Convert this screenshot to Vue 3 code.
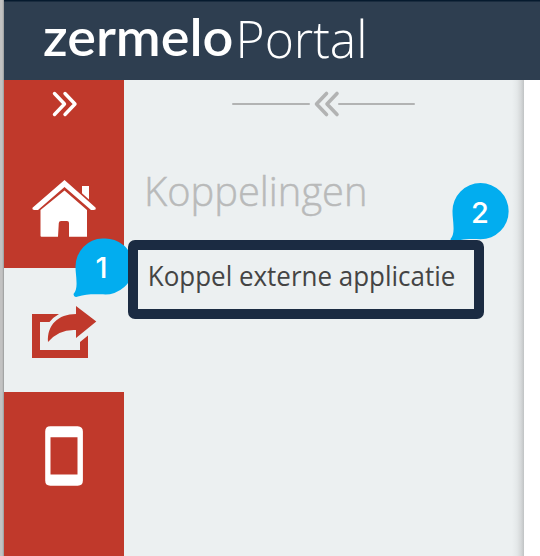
<script setup>
const title = 'Koppelingen'
const action = 'Koppel externe applicatie'
</script>

<template>
  <div class="screen">
    <div class="edge"></div>
    <div class="portal">
      <header class="header">
        <svg class="logo" width="400" height="80" viewBox="0 0 400 80">
          <text class="brand" x="39" y="56" textLength="190.500" lengthAdjust="spacingAndGlyphs">zermelo</text>
          <text class="product" x="231.500" y="57.500" textLength="132" lengthAdjust="spacingAndGlyphs">Portal</text>
        </svg>
      </header>
      <div class="body">
        <nav class="rail">
          <div class="tile home">
            <svg width="120" height="188" viewBox="4 80 120 188">
              <path d="M54.5 93.5 64.5 104 54.5 114.5M65 93.5 75 104 65 114.5" fill="none" stroke="#fff" stroke-width="3.4" stroke-linecap="round" stroke-linejoin="round" />
              <path d="M64.5 180 95.5 207.5Q96.500 210 93.500 210H91L64.500 187 38 210H34.500Q32 210 32.500 207.800Z" fill="#fff" />
              <path d="M82 186H89V199.500L82 193.300Z" fill="#fff" />
              <path d="M64.500 190.500 87 210V236.800H69V223Q69 221 67 221H61Q59 221 58.800 223L58 236.800H41.500Q40.500 236.800 40.500 235.800V210Z" fill="#fff" />
            </svg>
          </div>
          <div class="tile share">
            <svg width="120" height="124" viewBox="4 268 120 124">
              <path d="M32 314H59Q53.500 317 49.500 322H40V350H80V342L88 335.500V358H32Z" fill="#c0392b" />
              <path d="M76 306 96.300 321.500 76 338V330Q59 329 48 342C47 325 58 314 76 314Z" fill="#c0392b" />
            </svg>
          </div>
          <div class="tile phone">
            <svg width="120" height="164" viewBox="4 392 120 164">
              <path fill-rule="evenodd" d="M50.300 426.200H77.700Q82.900 426.500 82.900 431.500V480.500Q82.900 485.700 77.700 485.700H50.300Q45.200 485.700 45.200 480.500V431.500Q45.200 426.300 50.300 426.200ZM50.500 437.300V474.500H77.500V437.300Z" fill="#fff" />
            </svg>
          </div>
        </nav>
        <main class="panel">
          <div class="collapse">
            <span class="rule left"></span>
            <svg width="28" height="28" viewBox="0 0 28 28">
              <path d="M13.500 3.500 3.500 14 13.500 24.500M24 3.500 14 14 24 24.500" fill="none" stroke="#b2b3b3" stroke-width="3.600" stroke-linecap="round" stroke-linejoin="round" />
            </svg>
            <span class="rule right"></span>
          </div>
          <svg class="heading" width="260" height="60">
            <text class="title" x="16" y="44" textLength="223.500" lengthAdjust="spacingAndGlyphs">{{ title }}</text>
          </svg>
          <div class="choice">
            <svg width="336" height="59">
              <text class="action" x="9.800" y="36" textLength="307.500" lengthAdjust="spacingAndGlyphs">{{ action }}</text>
            </svg>
          </div>
        </main>
        <div class="page"></div>
      </div>
    </div>
    <svg class="marker first" width="55" height="62" viewBox="0 0 55 62">
      <path d="M29.500 .5H30A28 28 0 1 1 30 56.300C20 56 12 56 5 58.600Q1 60 .5 56Q4 52 3.500 44C3.400 38 2.500 34 2.500 28.500A27.500 28 0 0 1 29.500 .5Z" fill="#02adef" />
      <text x="28.500" y="39.500">1</text>
    </svg>
    <svg class="marker second" width="60" height="57" viewBox="0 0 60 57">
      <path d="M30.500 0A28 28 0 1 1 30.500 56.300C20 55.500 12 56 5 58.600Q1 60 .5 56Q4 52 3.500 44C3.400 38 2.500 34 2.500 28.500A28 28 0 0 1 30.500 0Z" fill="#02adef" />
      <text x="30" y="39.500">2</text>
    </svg>
  </div>
</template>

<style scoped>
.screen {
  position: relative;
  display: flex;
  width: 540px;
  height: 556px;
  overflow: hidden;
  background: #ecf0f1;
  font-family: "Open Sans", sans-serif;
}
svg { display: block; }
.edge {
  flex: 0 0 4px;
  background: linear-gradient(90deg, #c2c2c2 0 2px, #b4b4b4 3px, #929696 4px);
}
.portal { flex: 1; min-width: 0; }
.header {
  box-sizing: border-box;
  height: 80px;
  background: linear-gradient(#061a2e 0 1px, #2e3e50 2px);
}
.brand { font: 600 51px Lato, sans-serif; fill: #fff; }
.product { font-size: 51px; font-weight: 300; fill: #fff; }
.body { display: flex; height: 476px; }
.rail { flex: 0 0 120px; }
.tile { background: #c0392b; }
.home { height: 188px; }
.share { height: 124px; background: #ecf0f1; }
.phone { height: 164px; }
.panel {
  flex: 0 0 400px;
  background: linear-gradient(90deg, #ecf0f1 0 388px, #e4e8e9 393px, #d5d8d9 397px, #c0c3c4 400px);
}
.collapse {
  display: flex;
  align-items: center;
  height: 48px;
  padding-left: 108px;
}
.rule { height: 2px; background: #b2b3b3; border-radius: 1px; }
.left { width: 78px; margin-right: 3px; }
.right { width: 77px; margin-left: -3px; }
.heading { margin-top: 34px; margin-left: 4px; }
.title { font-size: 40.5px; font-weight: 300; fill: #b9baba; stroke: #b9baba; stroke-width: 0.5px; }
.choice {
  box-sizing: border-box;
  width: 356px;
  height: 79px;
  margin: 18px 0 0 4px;
  border: 10px solid #1b2b42;
  border-radius: 7px;
}
.action { font-size: 26.5px; fill: #444; }
.page { flex: 1; background: #fff; }
.marker { position: absolute; overflow: hidden; }
.marker text { font: 500 29px Inter, sans-serif; fill: #fff; text-anchor: middle; }
.first { left: 73px; top: 238px; }
.second { left: 450px; top: 183px; }
</style>
<style>
body { margin: 0; }
</style>
